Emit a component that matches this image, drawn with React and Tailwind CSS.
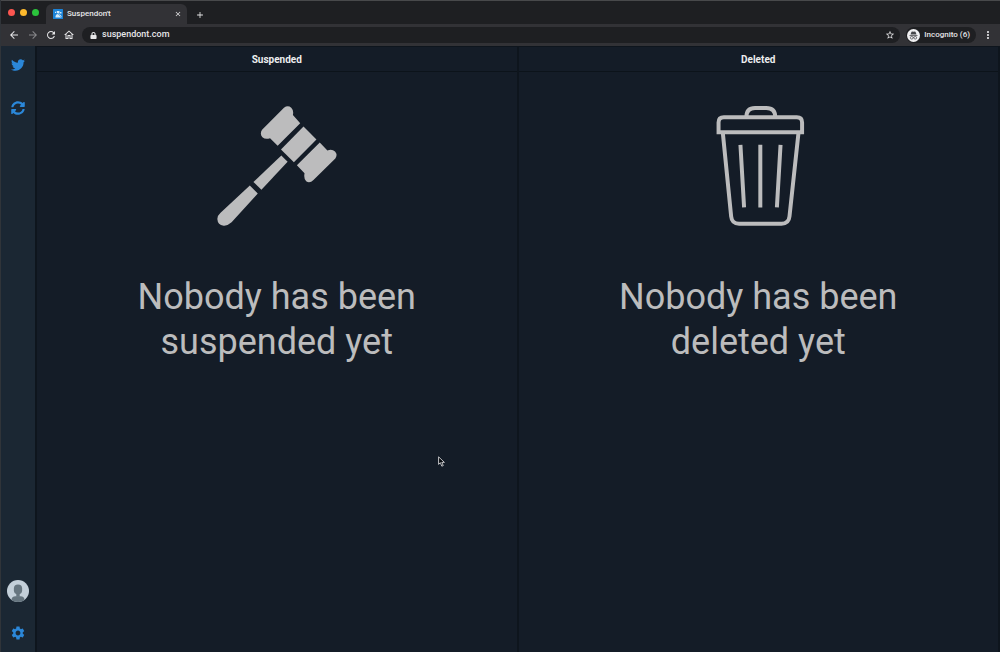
import { FaTwitter, FaLock, FaSyncAlt } from "react-icons/fa";
import { MdSettings, MdArrowBack, MdArrowForward, MdRefresh, MdOutlineHome, MdStarBorder, MdMoreVert, MdClose, MdAdd } from "react-icons/md";

function Gavel() {
  return (
    <svg viewBox="51 45 360 362" className="h-30 w-30" fill="currentColor" aria-hidden="true">
      <path d="M252 50Q264 41 274 50Q282 58 279 72L301 97L233 165L210 142Q196 147 187 139Q178 129 186 117Z" />
      <path d="M311 107L350 146L282 215L243 176Z" />
      <path d="M360 155L383 179Q397 174 406 182Q415 191 407 203L341 268Q330 279 319 272Q311 265 314 248L291 224Z" />
      <path d="M244 194L263 213L184 298L160 274Z" />
      <path d="M149 285L173 309L94 396Q82 407 70 406Q52 404 51 386Q51 376 60 368Z" />
    </svg>
  );
}

function Trash() {
  return (
    <svg viewBox="-7 0 360 362" className="h-30 w-30" fill="none" stroke="currentColor" strokeWidth="12" aria-hidden="true">
      <path d="M54 79V50Q54 34 70 34H290Q306 34 306 50V79Z" />
      <path d="M138 33Q138 6 164 6H198Q225 6 225 33" />
      <path d="M67 82L92 333Q94 355 116 355H244Q266 355 268 333L295 82" />
      <path d="M120 117L131 306M180 117V306M241 117L230 306" />
    </svg>
  );
}

function Favicon() {
  return (
    <svg viewBox="0 0 20 20" className="h-2.5 w-2.5" aria-hidden="true">
      <rect width="20" height="20" rx="1" fill="#1b83d8" />
      <path d="M4 5h3v3H4zM8 4h5v5H8zM14 6h3v3h-3zM5 14q1-4 5-4t7 4v3H5z" fill="#d5ecfc" />
      <path d="M3 3l14 14" stroke="#1b83d8" />
    </svg>
  );
}

function Incognito() {
  return (
    <svg viewBox="0 0 26 26" className="h-[13px] w-[13px]" aria-hidden="true">
      <circle cx="13" cy="13" r="13" fill="#f0f0f2" />
      <path d="M9 5.500L11 5L13 5.500L15 5L17 5.500L19 11H7ZM5 12H21V13.500H5Z" fill="#45464a" />
      <g fill="none" stroke="#45464a" strokeWidth="1.500">
        <circle cx="9.500" cy="17.500" r="2.700" />
        <circle cx="16.500" cy="17.500" r="2.700" />
        <path d="M12 17q1-.7 2 0" />
      </g>
    </svg>
  );
}

function Avatar() {
  return (
    <svg viewBox="0 0 64 64" className="h-[22px] w-[22px] rounded-full" aria-hidden="true">
      <rect width="64" height="64" fill="#c3cfd9" />
      <path d="M20 25q0-12 12-12t12 12v5q0 11-12 12q-12-1-12-12z" fill="#66757f" />
      <path d="M13 64V58q0-11 12-11h14q12 0 12 11v6z" fill="#66757f" />
      <path d="M27 39h10v10H27z" fill="#66757f" />
    </svg>
  );
}

function Browser() {
  return (
    <header className="border-t border-[#48494b] bg-[#1e1f22] text-[#e6e6e8]">
      <div className="flex h-[23px] items-end">
        <div className="flex h-[23px] w-[45px] items-center gap-[5px] pl-[7px]">
          <button aria-label="Close window" className="h-[7px] w-[7px] rounded-full bg-[#fc5650]" />
          <button aria-label="Minimize window" className="h-[7px] w-[7px] rounded-full bg-[#fdb92d]" />
          <button aria-label="Maximize window" className="h-[7px] w-[7px] rounded-full bg-[#2bc33c]" />
        </div>
        <div className="flex h-5 w-[141px] items-center rounded-t-md bg-[#323236] pr-[5px] pl-[7px]">
          <Favicon />
          <span className="ml-1 flex-1 text-[8px] font-medium">Suspendon't</span>
          <button aria-label="Close tab"><MdClose className="h-2 w-2" stroke="currentColor" /></button>
        </div>
        <button aria-label="New tab" className="mb-1 ml-2"><MdAdd className="h-2.5 w-2.5" /></button>
      </div>
      <nav className="flex h-[22px] items-center bg-[#323236] pr-1.5 pl-[7px]">
        <button aria-label="Back"><MdArrowBack className="h-3 w-3" stroke="currentColor" /></button>
        <button aria-label="Forward" className="ml-[7px] text-[#88888b]"><MdArrowForward className="h-3 w-3" /></button>
        <button aria-label="Reload" className="ml-1.5"><MdRefresh className="h-3 w-3" stroke="currentColor" /></button>
        <button aria-label="Home" className="ml-1.5"><MdOutlineHome className="h-3 w-3" stroke="currentColor" /></button>
        <div className="ml-[7px] flex h-4 flex-1 items-center rounded-full bg-[#1e1f22] pr-[5px] pl-2">
          <FaLock className="h-[7px] w-[7px]" />
          <input aria-label="Address" defaultValue="suspendont.com" className="ml-[5px] min-w-0 flex-1 bg-transparent text-[9px] font-medium outline-none" />
          <button aria-label="Bookmark"><MdStarBorder className="h-2.5 w-2.5" /></button>
        </div>
        <button className="ml-1.5 flex h-4 items-center gap-1 rounded-full bg-[#1e1f22] pr-1.5 pl-px text-[8px] font-medium">
          <Incognito />
          Incognito (6)
        </button>
        <button aria-label="Menu" className="ml-1.5"><MdMoreVert className="h-3 w-3" /></button>
      </nav>
    </header>
  );
}

function Column({ title, icon, lines }) {
  return (
    <section className="flex min-w-0 flex-1 flex-col border-r-2 border-[#0e151d]">
      <h2 className="h-[25px] border-b border-[#0c131a] text-center text-[10px] leading-[25px] font-bold text-[#edeeef]">{title}</h2>
      <div className="flex flex-col items-center pt-[34px] text-[#bcbcbd]">
        {icon}
        <p className="mt-[49px] text-center text-4xl leading-[45px]">
          {lines[0]}<br />{lines[1]}
        </p>
      </div>
    </section>
  );
}

export default function App() {
  return (
    <div className="relative flex min-h-screen flex-col border-l border-[#303439] bg-[#141c27] font-['Roboto','Liberation_Sans',sans-serif]">
      <Browser />
      <div className="flex flex-1">
        <aside className="flex w-9 shrink-0 flex-col items-center border-r-2 border-r-[#0e151d] bg-[#1b2733] pt-3 pb-[11px] text-[#2b87d8]">
          <a href="#home" aria-label="Twitter"><FaTwitter className="h-3.5 w-3.5" /></a>
          <button aria-label="Refresh" className="mt-[29px]"><FaSyncAlt className="h-3.5 w-3.5" /></button>
          <button aria-label="Account" className="mt-auto"><Avatar /></button>
          <button aria-label="Settings" className="mt-[23px]"><MdSettings className="h-4 w-4" /></button>
        </aside>
        <main className="flex min-w-0 flex-1 border-t border-[#0e151d]">
          <Column title="Suspended" icon={<Gavel />} lines={["Nobody has been", "suspended yet"]} />
          <Column title="Deleted" icon={<Trash />} lines={["Nobody has been", "deleted yet"]} />
        </main>
      </div>
      <svg viewBox="0 0 12 18" className="pointer-events-none absolute top-[456px] left-[437px] h-[11px] w-[7px]" aria-hidden="true">
        <path d="M1 1v13l3-3 2.500 6 2.500-1-2.500-5.500h4.500z" fill="#080b10" stroke="#d8d8da" strokeWidth="1.500" />
      </svg>
    </div>
  );
}
